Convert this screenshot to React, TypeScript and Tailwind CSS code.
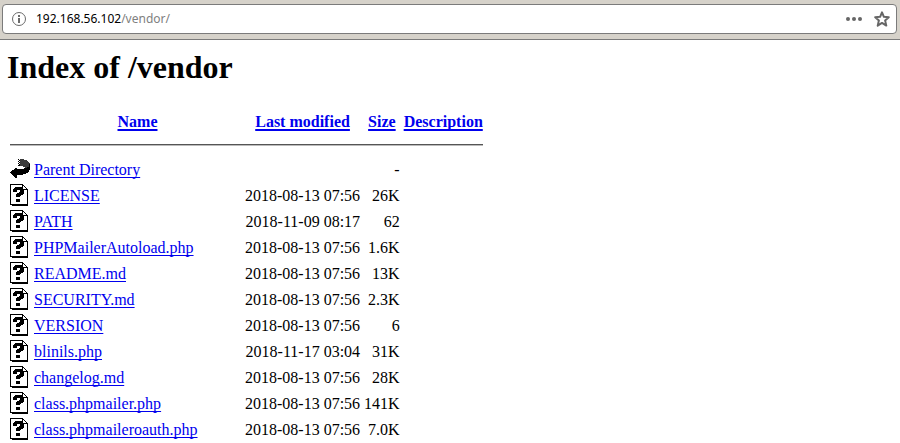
import React from "react";

const files = [
  ["LICENSE", "2018-08-13 07:56", "26K"],
  ["PATH", "2018-11-09 08:17", "62"],
  ["PHPMailerAutoload.php", "2018-08-13 07:56", "1.6K"],
  ["README.md", "2018-08-13 07:56", "13K"],
  ["SECURITY.md", "2018-08-13 07:56", "2.3K"],
  ["VERSION", "2018-08-13 07:56", "6"],
  ["blinils.php", "2018-11-17 03:04", "31K"],
  ["changelog.md", "2018-08-13 07:56", "28K"],
  ["class.phpmailer.php", "2018-08-13 07:56", "141K"],
  ["class.phpmaileroauth.php", "2018-08-13 07:56", "7.0K"],
];

function BackIcon() {
  return (
    <svg width="20" height="22" viewBox="0 0 20 22" shapeRendering="crispEdges" role="img" aria-label="Parent directory" className="block">
      <path fill="#3a3a3a" d="M10 1h4v1h3v1h1v1h1v1h1v4h-3v1h-2V9h-2V8h-3z" />
      <path fill="#000" d="M8 1h1v1H8zM9 2h1v1H9zM8 3h1v1H8zM9 4h1v1H9zM8 5h1v1H8zM9 6h1v1H9zM8 7h2v1H8z" />
      <path fill="#000" d="M20 6v6h-1v2h-1v1h-2v1h-3v1H7v3H5v-1H4v-1H3v-1H2v-1H1v-1H0v-1h1v-1h1v-1h2v-1h1v-1h2v1h7v-1h3V9h2V6z" />
    </svg>
  );
}

function UnknownIcon() {
  return (
    <svg width="20" height="22" viewBox="0 0 20 22" shapeRendering="crispEdges" role="img" aria-label="File" className="block">
      <path fill="#000" d="M0 0h13v1h1v1h1v1h1v1h1v1h1v17H2v-1H0z" />
      <path fill="#fff" d="M1 1h11v5h5v14H1z" />
      <path fill="#fff" d="M13 2h1v1h1v1h1v1h-3z" />
      <path fill="#000" d="M5 3h7v1h1v1h1v5h-1v1h-2v1h-1v1H6v-3h1V9h2V8h1V6H7v2H3V5h1V4h1zM6 15h4v3H6z" />
    </svg>
  );
}

export default function App() {
  return (
    <div className="bg-white font-['Liberation_Serif',serif] text-base text-black">
      <header className="border-b border-[#7b7b7b] bg-[#d6d2ca] pt-1 pr-[3px] pb-[5px] pl-0.5">
        <div className="flex h-[30px] items-center rounded-sm border border-[#7b7b7b] bg-white pr-1.5 pl-2 font-['Noto_Sans',sans-serif] text-xs">
          <button aria-label="Site information" className="shrink-0 text-[#6b6b6b]">
            <svg width="16" height="16" viewBox="0 0 16 16" fill="none" stroke="currentColor" className="block">
              <circle cx="8" cy="8" r="6.5" />
              <path strokeWidth="2" d="M8 7v5M8 4v2" />
            </svg>
          </button>
          <div role="textbox" aria-label="Address" className="ml-[9px] grow">
            192.168.56.102<span className="text-[#808080]">/vendor/</span>
          </div>
          <button aria-label="Page actions" className="mr-3 shrink-0">
            <svg width="18" height="16" viewBox="0 0 18 16" fill="#666" className="block">
              <circle cx="4" cy="8" r="2" />
              <circle cx="10" cy="8" r="2" />
              <circle cx="16" cy="8" r="2" />
            </svg>
          </button>
          <button aria-label="Bookmark this page" className="shrink-0">
            <svg width="16" height="16" viewBox="0 0 16 16" fill="none" stroke="#666" strokeWidth="2" strokeLinejoin="round" className="block">
              <path d="M8 1.300l1.900 4.500 4.900.4-3.700 3.200 1.200 5.200L8 11.900l-4.300 2.700 1.200-5.200L1.200 6.200l4.900-.4z" />
            </svg>
          </button>
        </div>
      </header>
      <main className="px-[7px] pt-2">
        <h1 className="text-[32px] leading-[38px] font-bold">Index of /vendor</h1>
        <table className="mt-[21px] border-separate border-spacing-0.5 leading-[18px] [&_a]:text-[#0000ee] [&_a]:underline [&_a]:underline-offset-2 [&_a]:[text-decoration-skip-ink:none] [&_td]:p-px [&_td+td]:pt-[3px] [&_th]:p-px [&_th_a]:decoration-2">
          <thead>
            <tr className="h-[26px]">
              <th className="w-[22px]"></th>
              <th className="w-[209px]"><a href="#name">Name</a></th>
              <th><a href="#modified">Last modified</a></th>
              <th><a href="#size">Size</a></th>
              <th><a href="#description">Description</a></th>
            </tr>
            <tr>
              <th colSpan={5}>
                <hr className="mt-1.5 mb-2 h-0.5 border-t border-b border-t-[#555] border-b-[#bbb]" />
              </th>
            </tr>
          </thead>
          <tbody>
            <tr>
              <td><BackIcon /></td>
              <td><a href="#parent">Parent Directory</a></td>
              <td></td>
              <td className="text-right">-</td>
              <td></td>
            </tr>
            {files.map(([name, date, size]) => (
              <tr key={name}>
                <td><UnknownIcon /></td>
                <td><a href={"#" + name}>{name}</a></td>
                <td className="text-right whitespace-nowrap">{date}</td>
                <td className="text-right">{size}</td>
                <td></td>
              </tr>
            ))}
          </tbody>
        </table>
      </main>
    </div>
  );
}
